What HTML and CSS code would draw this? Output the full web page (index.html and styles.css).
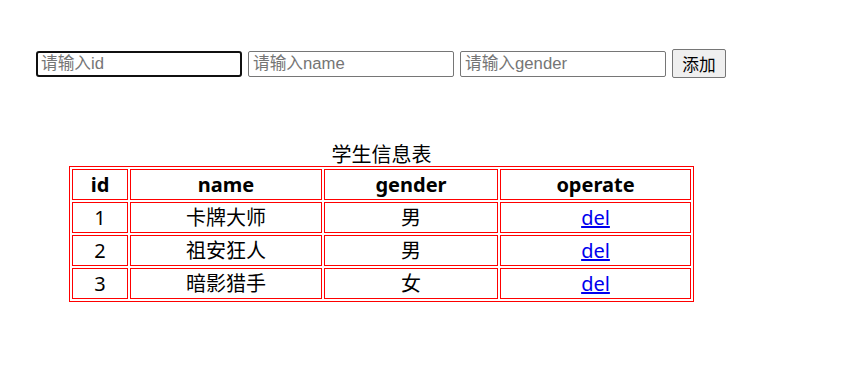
FILE: index.html
```html
<!DOCTYPE html>
<html lang="zh">
<head>
    <meta charset="UTF-8">
    <title>学生信息表</title>
    <link rel="stylesheet" href="styles.css">
</head>
<body>
    <div class="form-row">
        <input type="text" class="field focused" placeholder="请输入id">
        <input type="text" class="field" placeholder="请输入name">
        <input type="text" class="field" placeholder="请输入gender">
        <button class="add-btn">添加</button>
    </div>

    <table class="stu-table">
        <caption>学生信息表</caption>
        <thead>
            <tr>
                <th class="col-id">id</th>
                <th class="col-name">name</th>
                <th class="col-gender">gender</th>
                <th class="col-op">operate</th>
            </tr>
        </thead>
        <tbody>
            <tr><td>1</td><td>卡牌大师</td><td>男</td><td><a href="#">del</a></td></tr>
            <tr><td>2</td><td>祖安狂人</td><td>男</td><td><a href="#">del</a></td></tr>
            <tr><td>3</td><td>暗影猎手</td><td>女</td><td><a href="#">del</a></td></tr>
        </tbody>
    </table>
</body>
</html>
```

FILE: styles.css
```css
body {
    margin: 0;
    padding: 49px 0 0 36px;
    font-family: "Noto Sans", "Noto Sans CJK SC", sans-serif;
    color: #000;
    background: #fff;
}

/* form */
.form-row {
    display: flex;
    align-items: center;
    gap: 6px;
}

.field {
    width: 206px;
    height: 26px;
    box-sizing: border-box;
    padding: 0 4px;
    border: 1px solid #767676;
    border-radius: 2px;
    font-family: "Liberation Sans", "Noto Sans CJK SC", sans-serif;
    font-size: 16.7px;
    outline: none;
}

.field::placeholder {
    color: #757575;
}

.field.focused {
    border: 2px solid #101010;
    border-radius: 3px;
    padding: 0 3px;
}

.add-btn {
    height: 29px;
    width: 54px;
    box-sizing: border-box;
    border: 1px solid #767676;
    border-radius: 2px;
    background: #efefef;
    font-family: "Noto Sans CJK SC", sans-serif;
    font-size: 16.7px;
    padding: 0;
}

/* table */
.stu-table {
    margin: 64px 0 0 33px;
    border: 1px solid red;
    border-spacing: 2px;
    font-size: 20px;
    line-height: 23px;
}

.stu-table caption {
    font-family: "Noto Sans CJK SC", sans-serif;
    padding-bottom: 1px;
}

.stu-table th,
.stu-table td {
    border: 1px solid red;
    height: 31px;
    box-sizing: border-box;
    padding: 0;
    text-align: center;
}

.stu-table td {
    font-family: "Noto Sans", "Noto Sans CJK SC", sans-serif;
}

.col-id { width: 56px; }
.col-name { width: 192px; }
.col-gender { width: 174px; }
.col-op { width: 191px; }

.stu-table a {
    color: #0000ee;
}
```
